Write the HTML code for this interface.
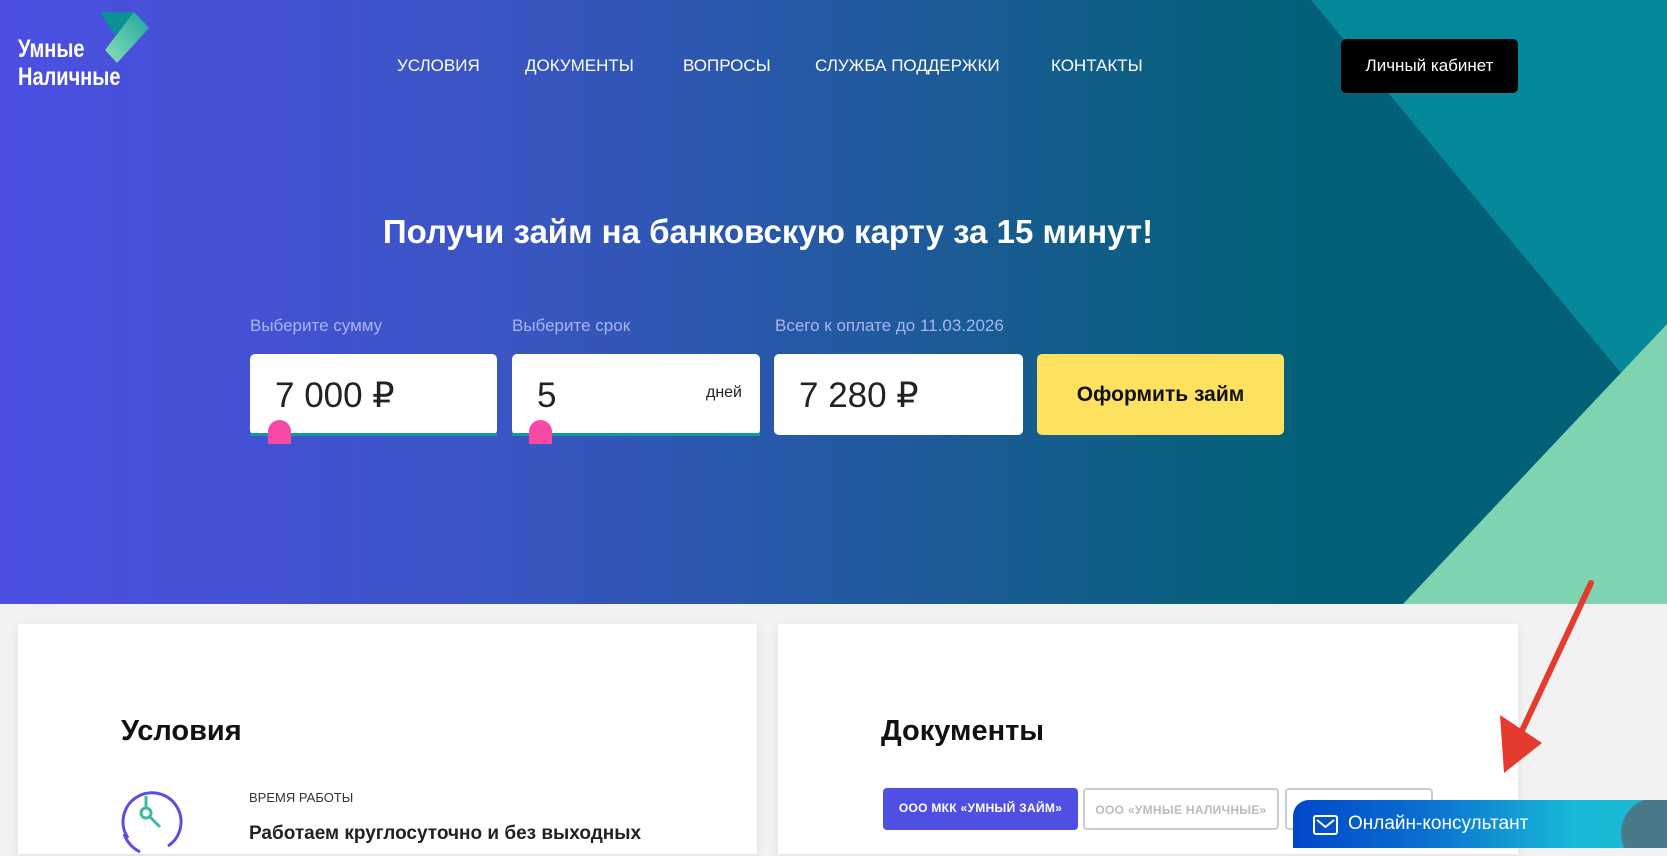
<!DOCTYPE html>
<html><head><meta charset="utf-8"><style>
*{margin:0;padding:0;box-sizing:border-box}
body{width:1667px;height:848px;overflow:hidden;background:#f2f2f2;font-family:"Liberation Sans",Arial,sans-serif;position:relative}
.hero{position:absolute;left:0;top:0;width:1667px;height:604px;background:linear-gradient(90deg,#4c4fe2 0%,#3a55c4 30%,#1e5a9a 55%,#05607a 75%,#006075 100%);overflow:hidden}
.abs{position:absolute}
.nav{position:absolute;top:56px;color:#fff;font-size:17px}
.lbl{position:absolute;top:316px;color:#a9b5ee;font-size:17px}
.box{position:absolute;top:354px;height:81px;background:#fff;border-radius:5px}
.val{position:absolute;top:22px;left:25px;font-size:35px;color:#222}
.track{position:absolute;top:433px;height:3px;background:#0f9b9b}
.knob{position:absolute;top:420px;width:23px;height:24px;background:#f64aa6;border-radius:12px 12px 0 0}
.card{position:absolute;top:624px;height:230px;background:#fff;box-shadow:0 2px 8px rgba(0,0,0,.08)}
.tab{position:absolute;top:788px;height:42px;border-radius:4px;font-size:12px;font-weight:bold;text-align:center;line-height:40px;letter-spacing:.3px}
</style></head><body>
<div class="hero">
<svg class="abs" style="left:0;top:0" width="1667" height="604">
<polygon points="1311,0 1667,0 1667,324 1621,373" fill="#05889a"/>
<polygon points="1667,324 1667,604 1403,604" fill="#7ed3b0"/>
</svg>
<svg class="abs" style="left:100px;top:12px" width="52" height="52" viewBox="0 0 52 52">
<defs><linearGradient id="g1" x1="0" y1="1" x2="1" y2="0"><stop offset="0" stop-color="#8be0b8"/><stop offset="1" stop-color="#19a69c"/></linearGradient></defs>
<polygon points="0,0 34,0 46,12 14,22" fill="#0d8f98"/>
<polygon points="34,0 49,16 17,51 5,38" fill="url(#g1)"/>
</svg>
<div class="abs" style="left:18px;top:35px;color:#fff;font-size:25px;font-weight:bold;line-height:28px;transform:scaleX(.8);transform-origin:left">Умные<br>Наличные</div>
<div class="nav" style="left:397px">УСЛОВИЯ</div>
<div class="nav" style="left:525px">ДОКУМЕНТЫ</div>
<div class="nav" style="left:683px">ВОПРОСЫ</div>
<div class="nav" style="left:815px">СЛУЖБА ПОДДЕРЖКИ</div>
<div class="nav" style="left:1051px">КОНТАКТЫ</div>
<div class="abs" style="left:1341px;top:39px;width:177px;height:54px;background:#000;border-radius:5px;color:#fff;font-size:17px;text-align:center;line-height:54px">Личный кабинет</div>
<div class="abs" style="left:0;width:1536px;top:213px;text-align:center;color:#fff;font-size:33px;font-weight:bold">Получи займ на банковскую карту за 15 минут!</div>
<div class="lbl" style="left:250px">Выберите сумму</div>
<div class="lbl" style="left:512px">Выберите срок</div>
<div class="lbl" style="left:775px">Всего к оплате до 11.03.2026</div>
<div class="box" style="left:250px;width:247px"><div class="val">7 000 ₽</div></div>
<div class="box" style="left:512px;width:248px"><div class="val">5</div><div class="abs" style="right:18px;top:30px;font-size:16px;color:#222">дней</div></div>
<div class="box" style="left:774px;width:249px"><div class="val">7 280 ₽</div></div>
<div class="box" style="left:1037px;width:247px;background:#ffe160;text-align:center;line-height:81px;font-size:21px;font-weight:bold;color:#111">Оформить займ</div>
<div class="track" style="left:250px;width:247px"></div>
<div class="track" style="left:512px;width:248px"></div>
<div class="knob" style="left:268px"></div>
<div class="knob" style="left:529px"></div>
</div>
<div class="card" style="left:18px;width:739px">
<div class="abs" style="left:103px;top:91px;font-size:29px;font-weight:bold;color:#111">Условия</div>
<svg class="abs" style="left:100px;top:162px" width="70" height="70" viewBox="0 0 70 70">
<path d="M10 52 A29 29 0 1 1 50 60" fill="none" stroke="#5a4fe0" stroke-width="3"/>
<path d="M6 48 A33 33 0 0 0 22 66" fill="none" stroke="#5a4fe0" stroke-width="3"/>
<line x1="28" y1="10" x2="28" y2="22" stroke="#3cb9a0" stroke-width="3"/>
<circle cx="28" cy="27" r="5" fill="none" stroke="#3cb9a0" stroke-width="3"/>
<line x1="32" y1="31" x2="42" y2="41" stroke="#3cb9a0" stroke-width="3"/>
</svg>
<div class="abs" style="left:231px;top:166px;font-size:13px;color:#333">ВРЕМЯ РАБОТЫ</div>
<div class="abs" style="left:231px;top:199px;font-size:19px;font-weight:bold;color:#222">Работаем круглосуточно и без выходных</div>
</div>
<div class="card" style="left:778px;width:740px">
<div class="abs" style="left:103px;top:91px;font-size:29px;font-weight:bold;color:#111">Документы</div>
</div>
<div class="tab" style="left:883px;width:195px;background:#4f50e3;color:#fff">ООО МКК «УМНЫЙ ЗАЙМ»</div>
<div class="tab" style="left:1083px;width:196px;border:2px solid #ccc;color:#bbb;background:#fff">ООО «УМНЫЕ НАЛИЧНЫЕ»</div>
<div class="tab" style="left:1285px;width:148px;border:2px solid #ccc;background:#fff"></div>
<div class="abs" style="left:1293px;top:800px;width:374px;height:48px;background:linear-gradient(90deg,#0047c9 0%,#0a6fd0 35%,#18b8d6 75%,#1bb9d3 100%);border-radius:16px 0 0 0;overflow:hidden">
<div class="abs" style="left:328px;top:-2px;width:70px;height:70px;border-radius:50%;background:#4a7a8a"></div>
<svg class="abs" style="left:20px;top:15px" width="25" height="20" viewBox="0 0 25 20"><rect x="1" y="1" width="23" height="18" rx="2" fill="none" stroke="#fff" stroke-width="2"/><path d="M4 5 L12.5 12 L21 5" fill="none" stroke="#fff" stroke-width="2"/></svg>
<div class="abs" style="left:55px;top:13px;color:#fff;font-size:19px">Онлайн-консультант</div>
</div>
<svg class="abs" style="left:1490px;top:575px" width="110" height="205" viewBox="0 0 110 205">
<line x1="101" y1="8" x2="30" y2="160" stroke="#e53b2f" stroke-width="6" stroke-linecap="round"/>
<polygon points="10,140 14,198 52,168" fill="#e53b2f"/>
</svg>
</body></html>
